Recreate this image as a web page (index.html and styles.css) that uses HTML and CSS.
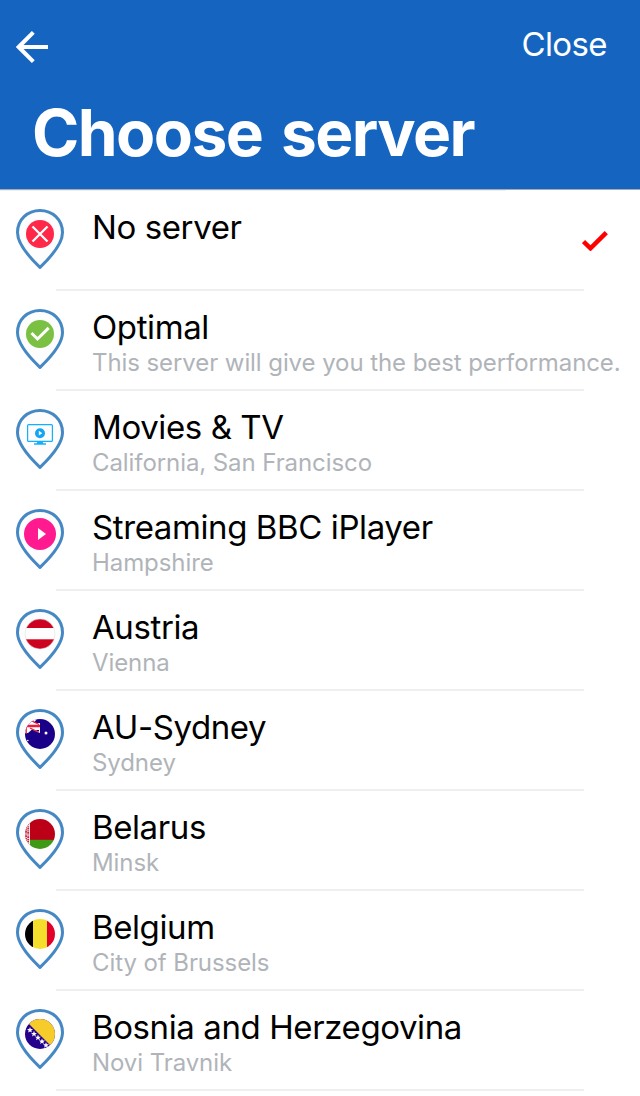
FILE: index.html
```html
<!DOCTYPE html>
<html lang="en">
<head>
    <meta charset="UTF-8">
    <meta name="viewport" content="width=device-width, initial-scale=1.0">
    <title>Choose server</title>
    <link rel="stylesheet" href="styles.css">
</head>
<body>
    <!-- shared shapes -->
    <svg class="defs" width="0" height="0">
        <defs>
            <clipPath id="round"><circle cx="24" cy="25" r="15"/></clipPath>
            <path id="pin" d="M24 58.3C19 53.5 1.5 37.500 1.500 23.500C1.500 10.500 11.500 1.500 24 1.500C36.500 1.500 46.500 10.500 46.500 23.500C46.500 37.500 29 53.500 24 58.300Z"/>
            <path id="star" d="M0 -3L.8 -.9L3 -.9L1.300 .5L1.900 2.600L0 1.400L-1.900 2.600L-1.300 .5L-3 -.9L-.8 -.9Z"/>
        </defs>
    </svg>

    <header class="header">
        <div class="bar">
            <svg class="back" viewBox="0 0 32 32"><path d="M32 16H3M17.300 1.400L2.700 16L17.300 30.600"/></svg>
            <a class="close">Close</a>
        </div>
        <h1 class="title">Choose server</h1>
    </header>
    <div class="header-line"></div>

    <ul class="servers">
        <li class="server">
            <svg class="pin" viewBox="0 0 48 60">
                <use href="#pin"/>
                <circle cx="24" cy="25" r="14" fill="#ff2849"/>
                <path class="mark" d="M16.500 17.500L31.500 32.500M31.500 17.500L16.500 32.500"/>
            </svg>
            <div class="info">
                <div class="name">No server</div>
            </div>
            <svg class="check" viewBox="0 0 26 20"><path d="M1.500 10.500L8.500 17.300L24.300 1.600"/></svg>
        </li>
        <li class="server">
            <svg class="pin" viewBox="0 0 48 60">
                <use href="#pin"/>
                <circle cx="24" cy="25" r="14" fill="#7ac143"/>
                <path class="mark tick" d="M15.500 24L21.500 30L32.700 18.900"/>
            </svg>
            <div class="info">
                <div class="name">Optimal</div>
                <div class="place">This server will give you the best performance.</div>
            </div>
        </li>
        <li class="server">
            <svg class="pin" viewBox="0 0 48 60">
                <use href="#pin"/>
                <rect x="11.600" y="15.600" width="24.800" height="16.800" rx="1" fill="none" stroke="#12b0ff" stroke-width="1.200"/>
                <path d="M21 33H27V34.200H30V35.800H18V34.200H21Z" fill="#12b0ff"/>
                <circle cx="24" cy="24.200" r="5" fill="#12a5f4"/>
                <path d="M22.800 21.800V26.600L26.300 24.200Z" fill="#fff"/>
            </svg>
            <div class="info">
                <div class="name">Movies &amp; TV</div>
                <div class="place">California, San Francisco</div>
            </div>
        </li>
        <li class="server">
            <svg class="pin" viewBox="0 0 48 60">
                <use href="#pin"/>
                <circle cx="24" cy="25" r="16" fill="#ff1a90"/>
                <path d="M22 19V31L30 25Z" fill="#fff"/>
            </svg>
            <div class="info">
                <div class="name">Streaming BBC iPlayer</div>
                <div class="place">Hampshire</div>
            </div>
        </li>
        <li class="server">
            <svg class="pin" viewBox="0 0 48 60">
                <use href="#pin"/>
                <g clip-path="url(#round)">
                    <rect x="9" y="10" width="30" height="9" fill="#cc0220"/>
                    <rect x="9" y="30.300" width="30" height="10" fill="#cc0220"/>
                </g>
                <circle cx="24" cy="25" r="15" fill="none" stroke="#ddd" stroke-width=".5"/>
            </svg>
            <div class="info">
                <div class="name">Austria</div>
                <div class="place">Vienna</div>
            </div>
        </li>
        <li class="server">
            <svg class="pin" viewBox="0 0 48 60">
                <use href="#pin"/>
                <g clip-path="url(#round)">
                    <rect x="9" y="10" width="30" height="30" fill="#1a0088"/>
                    <!-- union jack canton, cropped by the circle -->
                    <path d="M8 10H24V24L16 20.500L12 24H8Z" fill="#fff"/>
                    <path d="M17.500 14L21 10H24V14ZM18.500 21H23V22.500Z" fill="#1a0088"/>
                    <path d="M9 17H24" stroke="#ee1c3a" stroke-width="2.600"/>
                    <path d="M14 11L23 15.500M14 19L23 23.500M10.200 18V25" stroke="#ee1c3a" stroke-width="1.300"/>
                </g>
                <circle cx="30" cy="24" r="1.500" fill="#fff"/>
                <circle cx="11.800" cy="31.500" r=".8" fill="#fff"/>
            </svg>
            <div class="info">
                <div class="name">AU-Sydney</div>
                <div class="place">Sydney</div>
            </div>
        </li>
        <li class="server">
            <svg class="pin" viewBox="0 0 48 60">
                <use href="#pin"/>
                <g clip-path="url(#round)">
                    <rect x="9" y="10" width="30" height="21" fill="#bb0018"/>
                    <rect x="9" y="30.800" width="30" height="10" fill="#409914"/>
                    <rect x="9" y="10" width="5" height="30" fill="#fff"/>
                    <path d="M10 13V37M12.200 14V36" stroke="#c8203a" stroke-width="1.900" stroke-dasharray="2 .8 1 .6"/>
                </g>
            </svg>
            <div class="info">
                <div class="name">Belarus</div>
                <div class="place">Minsk</div>
            </div>
        </li>
        <li class="server">
            <svg class="pin" viewBox="0 0 48 60">
                <use href="#pin"/>
                <g clip-path="url(#round)">
                    <rect x="9" y="10" width="8" height="30" fill="#000"/>
                    <rect x="17" y="10" width="14" height="30" fill="#f6de2c"/>
                    <rect x="31" y="10" width="8" height="30" fill="#e0002a"/>
                </g>
            </svg>
            <div class="info">
                <div class="name">Belgium</div>
                <div class="place">City of Brussels</div>
            </div>
        </li>
        <li class="server">
            <svg class="pin" viewBox="0 0 48 60">
                <use href="#pin"/>
                <g clip-path="url(#round)">
                    <rect x="9" y="10" width="30" height="30" fill="#24008c"/>
                    <path d="M10 12L34.500 36.500L42 30V8H10Z" fill="#f6cc2a"/>
                    <g fill="#fff">
                        <use href="#star" x="14" y="21"/>
                        <use href="#star" x="18" y="24.800"/>
                        <use href="#star" x="22" y="28.600"/>
                        <use href="#star" x="26" y="32.400"/>
                        <use href="#star" x="30" y="36.200"/>
                    </g>
                </g>
            </svg>
            <div class="info">
                <div class="name">Bosnia and Herzegovina</div>
                <div class="place">Novi Travnik</div>
            </div>
        </li>
    </ul>
</body>
</html>
```

FILE: styles.css
```css
body {
    font-family: Inter, sans-serif;
    background-color: #fff;
    color: #000;
    margin: 0;
    padding: 0;
}

.defs {
    display: block;
}

.header {
    box-sizing: border-box;
    height: 190px;
    padding: 24px 33px 0 16px;
    background-color: #1565c0;
    border-bottom: 1px solid #a3abb5;
    color: #fff;
}

.header-line {
    width: 506px;
    height: 1px;
    background-color: #efeff0;
}

.bar {
    display: flex;
    justify-content: space-between;
    align-items: flex-start;
    height: 40px;
}

.back {
    width: 32px;
    height: 32px;
    margin-top: 7px;
    fill: none;
    stroke: #fff;
    stroke-width: 4;
}

.close {
    font-size: 33px;
    line-height: 40px;
    letter-spacing: -0.6px;
}

.title {
    margin: 30px 0 0 16px;
    font-size: 64px;
    font-weight: 700;
    line-height: 78px;
    letter-spacing: -1.55px;
    word-spacing: 5px;
}

.servers {
    list-style: none;
    margin: 0;
    padding: 0;
}

.server {
    display: flex;
    box-sizing: border-box;
    height: 100px;
    padding: 16px 32px 0 16px;
    background: linear-gradient(#efeff0, #efeff0) 56px 98px / 528px 2px no-repeat;
}

.pin {
    flex: none;
    width: 48px;
    height: 60px;
    margin: 2px 28px 0 0;
    fill: #fdfdfe;
    stroke: none;
}

.pin > use {
    stroke: #4588c4;
    stroke-width: 3;
}

.mark {
    fill: none;
    stroke: #fff;
    stroke-width: 2.3;
}

.tick {
    stroke-width: 3;
}

.info {
    flex: 1;
    white-space: nowrap;
}

.name {
    font-size: 33px;
    line-height: 40px;
    letter-spacing: -0.4px;
}

.place {
    font-size: 24px;
    line-height: 32px;
    letter-spacing: -0.08px;
    color: #b0b4b9;
}

.check {
    width: 26px;
    height: 20px;
    margin-top: 24px;
    fill: none;
    stroke: #f00;
    stroke-width: 4.5;
}
```
